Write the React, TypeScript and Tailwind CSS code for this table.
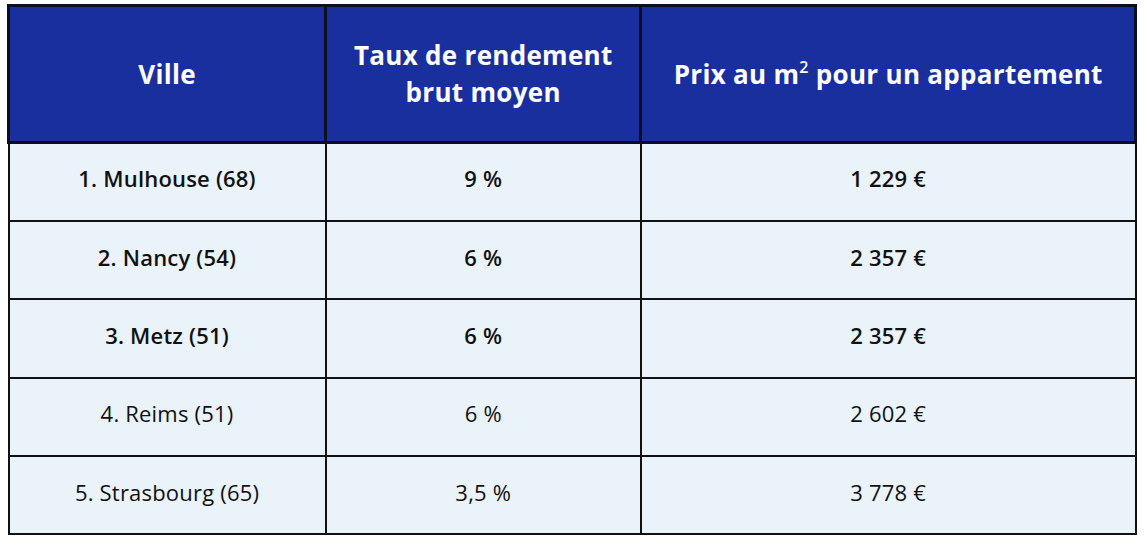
const rows = [
  { ville: '1. Mulhouse (68)', taux: '9 %', prix: '1 229 €', bold: true },
  { ville: '2. Nancy (54)', taux: '6 %', prix: '2 357 €', bold: true },
  { ville: '3. Metz (51)', taux: '6 %', prix: '2 357 €', bold: true },
  { ville: '4. Reims (51)', taux: '6 %', prix: '2 602 €', bold: false },
  { ville: '5. Strasbourg (65)', taux: '3,5 %', prix: '3 778 €', bold: false },
];

export default function App() {
  return (
    <div
      className="w-[1144px] h-[540px] bg-white pt-[4px] pl-[7px]"
      style={{ fontFamily: '"Open Sans", "Noto Sans", sans-serif' }}
    >
      <table className="w-[1130px] border-collapse text-center">
        <colgroup>
          <col className="w-[318px]" />
          <col className="w-[316px]" />
          <col className="w-[496px]" />
        </colgroup>
        <thead>
          <tr className="h-[137px] bg-[#1a2f9e] text-white text-[26px] leading-[37px] tracking-[0.3px]">
            <th className="border-[3px] border-[#0b0f24] font-bold">Ville</th>
            <th className="border-[3px] border-[#0b0f24] font-bold">
              Taux de rendement
              <br />
              brut moyen
            </th>
            <th className="border-[3px] border-[#0b0f24] font-bold">
              Prix au m
              <span className="inline-block text-[16px] leading-none relative -top-[11px] font-semibold">2</span> pour un
              appartement
            </th>
          </tr>
        </thead>
        <tbody>
          {rows.map((r) => (
            <tr
              key={r.ville}
              className={`h-[78.4px] bg-[#eaf2fa] text-[#111111] text-[22px] tracking-[0.2px] ${r.bold ? 'font-semibold' : 'font-normal'}`}
            >
              <td className="border-2 border-[#111111] pb-[6px]">{r.ville}</td>
              <td className="border-2 border-[#111111] pb-[6px]">{r.taux}</td>
              <td className="border-2 border-[#111111] pb-[6px]">{r.prix}</td>
            </tr>
          ))}
        </tbody>
      </table>
    </div>
  );
}
